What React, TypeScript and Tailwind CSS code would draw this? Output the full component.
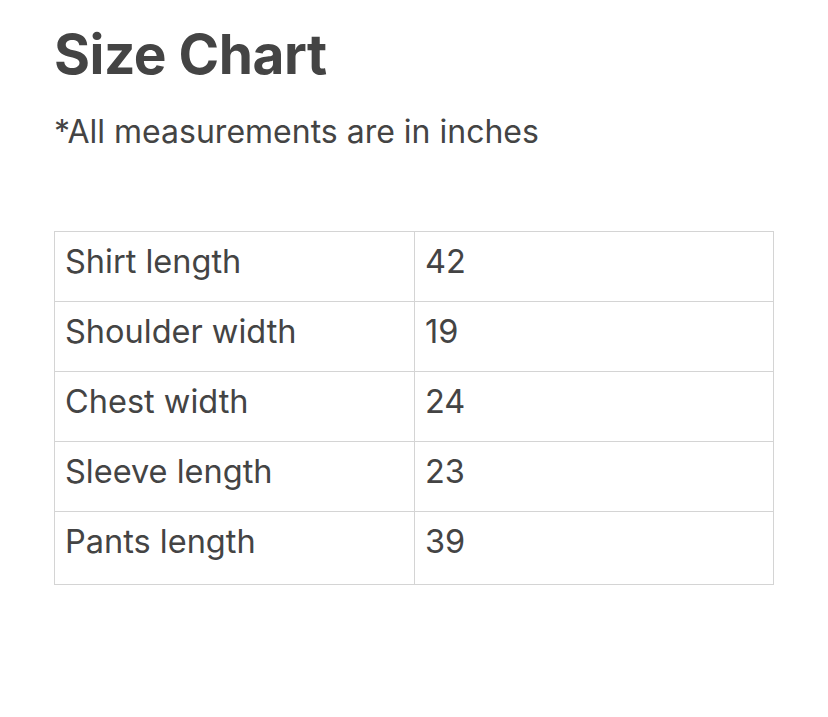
const rows: [string, string][] = [
  ['Shirt length', '42'],
  ['Shoulder width', '19'],
  ['Chest width', '24'],
  ['Sleeve length', '23'],
  ['Pants length', '39'],
]

export default function App() {
  return (
    <div className="min-h-[717px] w-[828px] bg-white pl-[54px] pt-[22px] text-[#444444] font-['Inter',sans-serif]">
      <h1 className="text-[55px] font-bold leading-[64px] tracking-[-0.5px]">Size Chart</h1>
      <p className="mt-[27px] text-[32px] leading-[38px]">*All measurements are in inches</p>

      <table className="mt-[80px] w-[720px] border-collapse text-[32.5px] leading-[40px]">
        <tbody>
          {rows.map(([label, value], i) => (
            <tr key={label} className={i === rows.length - 1 ? 'h-[73px]' : 'h-[70px]'}>
              <td className="w-[360px] border border-[#d4d4d4] px-[10px] pt-[10px] align-top">{label}</td>
              <td className="border border-[#d4d4d4] px-[10px] pt-[10px] align-top">{value}</td>
            </tr>
          ))}
        </tbody>
      </table>
    </div>
  )
}
